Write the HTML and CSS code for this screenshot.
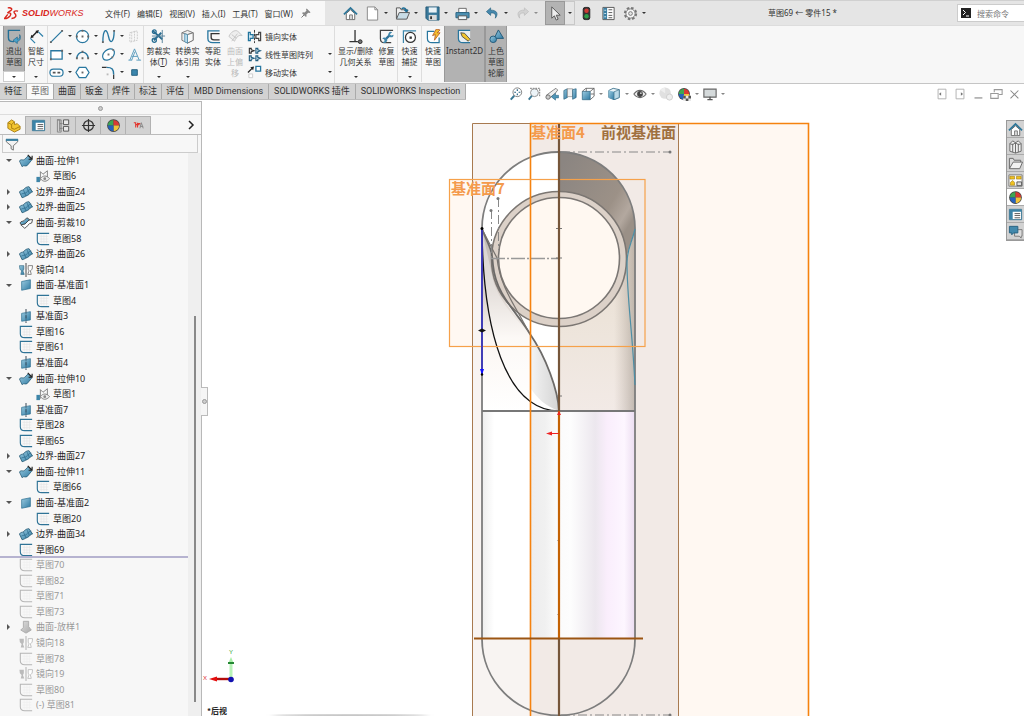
FILE: index.html
```html
<!DOCTYPE html>
<html lang="zh-CN">
<head>
<meta charset="utf-8">
<title>SOLIDWORKS</title>
<link rel="stylesheet" href="styles.css">
</head>
<body>
<svg class="defs" aria-hidden="true">
<defs>
<linearGradient id="steel" x1="0" y1="0" x2="1" y2="1"><stop offset="0" stop-color="#9ccbe0"/><stop offset="1" stop-color="#2f7ba3"/></linearGradient>
<linearGradient id="ash" x1="0" y1="0" x2="1" y2="1"><stop offset="0" stop-color="#ddd"/><stop offset="1" stop-color="#aaa"/></linearGradient>
<symbol id="home" viewBox="0 0 16 16"><path d="M3.500 8v6.500h9V8L8 4z" fill="#fff" stroke="#666"/><path d="M1 9l7-7 7 7" fill="none" stroke="#2d7699" stroke-width="1.800"/><path d="M7 14V9.500h3V14" fill="#ddd" stroke="#777"/></symbol>
<symbol id="doc" viewBox="0 0 16 16"><path d="M2.500 1h8l3 3v11h-11z" fill="#fff" stroke="#888"/><path d="M10.500 1v3h3" fill="none" stroke="#888"/></symbol>
<symbol id="open" viewBox="0 0 16 16"><path d="M1.500 13V2h4l1 2H13v9z" fill="#eee" stroke="#555"/><path d="M1.500 14l3-7H15.500l-3 7z" fill="#c8dce6" stroke="#555"/><path d="M7 3c3-2 5 0 5 2M10 4l2 2 2-2" fill="none" stroke="#1b6d96" stroke-width="1.400"/></symbol>
<symbol id="save" viewBox="0 0 16 16"><path d="M1 1h14v14H3l-2-2z" fill="#39789a" stroke="#245b78"/><path d="M4 1.500h8.500V7H4z" fill="#e9f2f6"/><path d="M4 9.500h8.500V15H4z" fill="#d8dadb"/><path d="M5.500 11h2v3h-2z" fill="#333"/></symbol>
<symbol id="print" viewBox="0 0 16 16"><path d="M4 2.500h8V7H4z" fill="#fff" stroke="#666"/><path d="M1 7h14v5.500H1z" fill="#4d90b2" stroke="#286281"/><path d="M3.500 10.500h9v4h-9z" fill="#eef6fa" stroke="#555"/></symbol>
<symbol id="undo" viewBox="0 0 16 16"><path d="M6 2L1.500 6 6 10V7.500c4-.5 6 1 5 5.500 4-5 1-9-5-8.500z" fill="#4688ad" stroke="#22607f" stroke-width=".7"/></symbol>
<symbol id="redo" viewBox="0 0 16 16"><path d="M10 2l4.500 4L10 10V7.500c-4-.5-6 1-5 5.500-4-5-1-9 5-8.500z" fill="#d2d2d2" stroke="#bbb" stroke-width=".7"/></symbol>
<symbol id="cursor" viewBox="0 0 16 16"><path d="M4 1v12l2.800-2.500 2 4.500 2-1-2-4.200H13z" fill="#eee" stroke="#555"/></symbol>
<symbol id="lights" viewBox="0 0 16 16"><rect x="4.500" y="1.500" width="7" height="13" rx="2" fill="#333" stroke="#222"/><circle cx="8" cy="5" r="2.400" fill="#cf3a34"/><circle cx="8" cy="11" r="2.400" fill="#2f9e48"/></symbol>
<symbol id="options" viewBox="0 0 16 16"><path d="M2 1.500h12v13H2z" fill="#fff" stroke="#555"/><path d="M2.500 2h4v12h-4z" fill="#3b7fa3"/><path d="M8 4h4M8 7h4M8 10h4M8 12.500h4" stroke="#555"/><path d="M3.500 4.500h2M3.500 8h2M3.500 11.500h2" stroke="#d8eaf2"/></symbol>
<symbol id="gear" viewBox="0 0 16 16"><circle cx="8" cy="8" r="6" fill="none" stroke="#777" stroke-width="2.200" stroke-dasharray="2.700 2"/><circle cx="8" cy="8" r="4.900" fill="#f4f4f4" stroke="#777"/><circle cx="8" cy="8" r="2" fill="#e5e5e5" stroke="#777"/></symbol>
<symbol id="pin" viewBox="0 0 16 16"><path d="M9 2l5 5-1 1-2-.5L8.500 10l.3 2.500-1.300.5L3 8.500 3.600 7 6 7.300 8.600 5 8 3z" fill="#888"/><path d="M5.500 10.500L2 14" stroke="#777" stroke-width="1.300"/></symbol>
<symbol id="exit" viewBox="0 0 16 16"><path d="M14 1.500H1.500V9c0 3 2 4.500 5 4.500h1" fill="none" stroke="#246f96" stroke-width="1.500"/><path d="M13.500 6c2 4 0 7-2.500 7v2.500L6.500 12 11 8.500V11c2 0 3-2 2.500-5z" fill="#4ba3cb" stroke="#236486" stroke-width=".7"/></symbol>
<symbol id="dim" viewBox="0 0 16 16"><path d="M3 8.500l6-6" stroke="#222" stroke-width="1.500"/><path d="M1.500 9.800l1-3.600 2.600 2.600zM10.500 1l-3.700 1L9.500 4.700z" fill="#222"/><path d="M1.500 10l5 5M10 3l5 5" stroke="#2f81aa" stroke-width="1.300"/></symbol>
<symbol id="line" viewBox="0 0 16 16"><path d="M2 14L14 2" stroke="#2877a0" stroke-width="1.400"/><path d="M1 13h2v2H1zM13 1h2v2h-2z" fill="#666"/></symbol>
<symbol id="circle" viewBox="0 0 16 16"><circle cx="8" cy="8" r="6.500" fill="#fff" stroke="#2877a0" stroke-width="1.300"/><path d="M7 7h2v2H7zM13 7h2v2h-2zM7 1h2v2H7zM1 7h2v2H1z" fill="#666"/></symbol>
<symbol id="spline" viewBox="0 0 16 16"><path d="M2 14C2 0 6-2 8 8s6 5 6-6" fill="none" stroke="#2877a0" stroke-width="1.400"/><path d="M1 13h2v2H1zM13 1h2v2h-2z" fill="#666"/></symbol>
<symbol id="plane-off" viewBox="0 0 16 16"><path d="M3 4l8-2v10l-8 2zM5 3v11M8 2v12" fill="none" stroke="#ccc" stroke-dasharray="2 1"/></symbol>
<symbol id="rect" viewBox="0 0 16 16"><path d="M2 4h12v9H2z" fill="#fff" stroke="#2877a0" stroke-width="1.400"/><path d="M1 12h2v2H1zM13 3h2v2h-2z" fill="#666"/></symbol>
<symbol id="arc" viewBox="0 0 16 16"><path d="M2 12a6 6.500 0 0 1 12 0" fill="none" stroke="#2877a0" stroke-width="1.400"/><path d="M1 11h2v2H1zM13 11h2v2h-2zM7 11h2v2H7zM7 4h2v2H7z" fill="#666"/></symbol>
<symbol id="ellipse" viewBox="0 0 16 16"><ellipse cx="8" cy="8" rx="7.200" ry="5" transform="rotate(-42 8 8)" fill="#fff" stroke="#2877a0" stroke-width="1.300"/><path d="M7 7h2v2H7zM12 2h2v2h-2zM11 10h2v2h-2z" fill="#777"/></symbol>
<symbol id="lettering" viewBox="0 0 16 16"><path d="M1.500 14h4M10 14h5M3 14L8 2l5 12M5.500 10h5.500M5 14L8.500 5" fill="none" stroke="#5a9bbd" stroke-width="1"/></symbol>
<symbol id="slot" viewBox="0 0 16 16"><rect x="1" y="4.500" width="14" height="7.500" rx="3.700" fill="#fff" stroke="#2877a0" stroke-width="1.300"/><path d="M4 8.200h3M9 8.200h3" stroke="#555" stroke-width="1.800"/></symbol>
<symbol id="polygon" viewBox="0 0 16 16"><path d="M4.500 2.500h7L15 8l-3.500 5.500h-7L1 8z" fill="#fff" stroke="#2877a0" stroke-width="1.300"/><path d="M7 7h2v2H7z" fill="#666"/></symbol>
<symbol id="fillet" viewBox="0 0 16 16"><path d="M1 2.500h5M13.500 10v5" stroke="#333" stroke-width="1.300"/><path d="M6 2.500c6 0 7.500 2 7.500 7.500" fill="none" stroke="#2877a0" stroke-width="1.500"/><path d="M6 9h2v2H6z" fill="#bbb"/></symbol>
<symbol id="point" viewBox="0 0 16 16"><path d="M5 5h6v6H5z" fill="#3a86ad" stroke="#24607f"/></symbol>
<symbol id="trim" viewBox="0 0 16 16"><path d="M2 2l10 9M3 12l8-8" stroke="#2a6c90" stroke-width="2"/><circle cx="3.500" cy="3" r="2" fill="none" stroke="#286d92" stroke-width="1.400"/><circle cx="3.500" cy="12" r="2.200" fill="none" stroke="#286d92" stroke-width="1.400"/><path d="M1 7.500h14M12 1v14" stroke="#54809a"/></symbol>
<symbol id="cube" viewBox="0 0 16 16"><path d="M2 4l6-2.500L14 4v8l-6 3-6-3z" fill="#eee" stroke="#777"/><path d="M2 4l6 2 6-2M8 6v9" fill="none" stroke="#777"/><path d="M8 6v9l6-3V4z" fill="#f8f8f8" stroke="#777"/><path d="M5 5v8.500L8 15V6z" fill="#bcdbea" stroke="#4a8fb2" stroke-width=".8"/></symbol>
<symbol id="offset" viewBox="0 0 16 16"><path d="M14.500 2H2v8c0 3 2 4.500 5 4.500h8" fill="none" stroke="#2877a0" stroke-width="1.400"/><path d="M14.500 5H5.500v4c0 2 1 2.500 3 2.500h6" fill="none" stroke="#333" stroke-width="1.400"/></symbol>
<symbol id="surf-off" viewBox="0 0 16 16"><path d="M1 8c2-5 6-7 9-6l5 5c-3-1-6 1-8 6zM4 6l5 4M4 13l6-8" fill="#eee" stroke="#c5c5c5"/></symbol>
<symbol id="mirror" viewBox="0 0 16 16"><path d="M8 1v14" stroke="#333" stroke-dasharray="3 1"/><path d="M1.500 3.500h2V6h3v4h-3v2.500h-2z" fill="#d7ebf5" stroke="#22749d" stroke-width="1.300"/><path d="M14.500 3.500h-2V6h-3v4h3v2.500h2z" fill="#fff" stroke="#444" stroke-width="1.300"/></symbol>
<symbol id="pattern" viewBox="0 0 16 16"><path d="M2.500 1.500v5h2v-1.500l3-1-3-1V1.500z" fill="#fff" stroke="#333" stroke-width="1.200"/><path d="M9.500 1.500v5h2v-1.500l3-1-3-1V1.500zM2.500 9.500v5h2V13l3-1-3-1V9.500zM9.500 9.500v5h2V13l3-1-3-1V9.500z" fill="#d9edf6" stroke="#235f80" stroke-width="1.200"/></symbol>
<symbol id="move" viewBox="0 0 16 16"><path d="M9.500 1.500h5v5h-5z" fill="#fff" stroke="#2877a0" stroke-width="1.400"/><path d="M2 9.500h4v4H2z" fill="#fff" stroke="#ccc"/><path d="M1 8l5-5" stroke="#222" stroke-width="1.300"/><path d="M7.500 1.500l-4 1 3 3z" fill="#222"/></symbol>
<symbol id="relations" viewBox="0 0 16 16"><path d="M7.500 1v12M1.500 13.500h9" stroke="#333" stroke-width="1.400"/><circle cx="13" cy="13.500" r="2" fill="#777" stroke="#222"/></symbol>
<symbol id="repair" viewBox="0 0 16 16"><path d="M15 1.500H1.500V10c0 3 2 4.500 4 4.500H13" fill="none" stroke="#444" stroke-width="1.300"/><path d="M6.500 11.500l5-5" stroke="#2e7095" stroke-width="2.400"/><path d="M14 3.500a2.800 2.800 0 1 0 1.500 2.500l-2.500 1-1.500-1.500z" fill="#3f86ab"/><path d="M4 14a2.800 2.800 0 1 0-.5-3.500l2 .5.500 2z" fill="#3f86ab"/></symbol>
<symbol id="snap" viewBox="0 0 16 16"><path d="M15 2H1.500v13" fill="none" stroke="#3d88ad" stroke-width="1.300"/><circle cx="9" cy="9" r="5.300" fill="#fff" stroke="#333" stroke-width="1.300"/><path d="M8 8h2.500v2.500H8z" fill="#333"/></symbol>
<symbol id="rapid" viewBox="0 0 16 16"><path d="M9 2.500H1.500V10c0 3 2 4.500 5 4.500H14V9" fill="#fff" stroke="#28769e" stroke-width="1.300"/><path d="M11 0L7 7l3-1-1 6 6-8h-3l3-3z" fill="#f2bc2c" stroke="#b05220" stroke-width=".8"/></symbol>
<symbol id="instant" viewBox="0 0 16 16"><path d="M14 1.500H1.500V10c0 3 2 4.500 5 4.500H14" fill="#e8eef0" stroke="#28769e" stroke-width="1.300"/><path d="M4 4l4 .5 6 6.500-2 2-6.500-5z" fill="#f0c52e" stroke="#454545" stroke-width=".9"/></symbol>
<symbol id="contour" viewBox="0 0 16 16"><path d="M10 1l5.500 9H5.500z" fill="url(#steel)" stroke="#1f5877"/><circle cx="4.500" cy="11" r="3.500" fill="url(#steel)" stroke="#1f5877"/></symbol>
<symbol id="zoomfit" viewBox="0 0 16 16"><circle cx="9.500" cy="6" r="5" fill="#fff" stroke="#777"/><path d="M9.500 2.500v2M9.500 7.500v2M6 6h2M11 6h2" stroke="#235f80" stroke-width="1.300"/><path d="M6 10l-4 4.500" stroke="#397894" stroke-width="2.200"/></symbol>
<symbol id="zoomarea" viewBox="0 0 16 16"><path d="M3.500 1.500h11v10" fill="none" stroke="#666" stroke-dasharray="2 1"/><circle cx="8.500" cy="6.500" r="4.500" fill="#edf4f8" stroke="#888"/><path d="M5.500 10L2 14.500" stroke="#397894" stroke-width="2.200"/></symbol>
<symbol id="prevview" viewBox="0 0 16 16"><path d="M1.500 9.500l8-6 3-2 2 2-3 4-6 5z" fill="#eee" stroke="#777"/><path d="M7 11l5-4v2.500h3.500v3H12V15z" fill="#4e95b7" stroke="#286281" stroke-width=".6"/><circle cx="3.500" cy="11.500" r="2.500" fill="#ccc" stroke="#666"/></symbol>
<symbol id="section" viewBox="0 0 16 16"><path d="M1 4l4-2v10l-4 2z" fill="url(#steel)" stroke="#28627f" stroke-width=".8"/><path d="M5 2h6v9H5z" fill="#f0f0f0" stroke="#888" stroke-width=".8"/><path d="M11 3l4-1v10l-4 2z" fill="url(#steel)" stroke="#28627f" stroke-width=".8"/></symbol>
<symbol id="orient" viewBox="0 0 16 16"><path d="M1.500 5h9v9.500h-9z" fill="url(#steel)" stroke="#28627f" stroke-width=".8"/><path d="M1.500 5l4-3.500h9.500L10.500 5M15 1.500v9l-4.500 4M6 1.500V5M11 8h4" fill="none" stroke="#555" stroke-width=".9"/></symbol>
<symbol id="style" viewBox="0 0 16 16"><path d="M2 4l5-2.500L14 3v9l-6 2.500L2 12z" fill="#e9f3f7" stroke="#3b718b"/><path d="M2 4l6 1.500v9L2 12z" fill="url(#steel)"/><path d="M8 5.500L14 3v9l-6 2.500z" fill="#b9d9e7" stroke="#3b718b" stroke-width=".8"/></symbol>
<symbol id="eye" viewBox="0 0 16 16"><path d="M1 8c4-5.500 10-5.500 14 0-4 5.500-10 5.500-14 0z" fill="#eee" stroke="#666" stroke-width="1.200"/><circle cx="8" cy="8" r="3.300" fill="#444"/><circle cx="9" cy="7" r="1" fill="#ccc"/></symbol>
<symbol id="ball-off" viewBox="0 0 16 16"><circle cx="7" cy="7" r="6.500" fill="#e0e0e0"/><path d="M7 7L1.500 3.500A6.500 6.500 0 0 1 7 .5z" fill="#eee"/><circle cx="12" cy="11.500" r="3.500" fill="#eee" stroke="#ccc"/></symbol>
<symbol id="ball" viewBox="0 0 16 16"><circle cx="8" cy="8" r="6.800" fill="#444"/><path d="M8 8V2a6 6 0 0 0-6 6z" fill="#3da653"/><path d="M8 8V2a6 6 0 0 1 6 6z" fill="#d93934"/><path d="M8 8h6a6 6 0 0 1-6 6z" fill="#f0c43b"/><path d="M8 8v6a6 6 0 0 1-6-6z" fill="#2662bd"/></symbol>
<symbol id="scene" viewBox="0 0 16 16"><use href="#ball"/><path d="M7 10h9v6H7z" fill="#e8e8e8"/><path d="M7 10h3v3H7zM13 10h3v3h-3zM10 13h3v3h-3z" fill="#555"/></symbol>
<symbol id="monitor" viewBox="0 0 16 16"><path d="M1 2.500h14v9H1z" fill="#d5dadb" stroke="#666" stroke-width="1.300"/><path d="M8 11v3M5 14.500h6" stroke="#555" stroke-width="1.500"/></symbol>
<symbol id="collapse-l" viewBox="0 0 16 16"><path d="M3.500 2.500h9v11h-9z" fill="#fff" stroke="#aaa"/><path d="M7 6v4L4.500 8z" fill="#777"/></symbol>
<symbol id="collapse-r" viewBox="0 0 16 16"><path d="M3.500 2.500h9v11h-9z" fill="#fff" stroke="#aaa"/><path d="M9 6v4l2.500-2z" fill="#777"/></symbol>
<symbol id="minimize" viewBox="0 0 16 16"><path d="M4 12.500h9" stroke="#888" stroke-width="1.300"/></symbol>
<symbol id="restore" viewBox="0 0 16 16"><path d="M6 6V3h9v5.500h-3.500M2 7.500h8.500V13H2z" fill="none" stroke="#999" stroke-width="1.200"/></symbol>
<symbol id="close" viewBox="0 0 16 16"><path d="M4 4l9 9M13 4l-9 9" stroke="#888" stroke-width="1.200"/></symbol>
<symbol id="part" viewBox="0 0 16 16"><path d="M2 5l4-3 3 2v3l3-1 3 3v3l-6 3-7-4z" fill="#f3c631" stroke="#a97d12"/><path d="M2 5l4 2v4l3 1 6-3M6 7l3-3" fill="none" stroke="#a97d12"/></symbol>
<symbol id="props" viewBox="0 0 16 16"><path d="M1.500 2.500h13v11h-13z" fill="#fff" stroke="#2f708f"/><path d="M2 3h12v2H2zM2 5h3v8H2z" fill="#3b83a7"/><path d="M7 7h6M7 9h6M7 11.500h6" stroke="#555"/></symbol>
<symbol id="config" viewBox="0 0 16 16"><path d="M1 2h3v12M4 6h3M4 11h3" fill="none" stroke="#777"/><path d="M1.500 2h4v13h-4z" fill="none" stroke="#888"/><path d="M8 2h5.500v5H8zM8 9h5.500v5H8z" fill="#e8e8e8" stroke="#555"/></symbol>
<symbol id="target" viewBox="0 0 16 16"><circle cx="8" cy="8" r="5.200" fill="none" stroke="#333" stroke-width="1.300"/><path d="M8 1v14M1 8h14" stroke="#333" stroke-width="1.300"/></symbol>
<symbol id="inspect" viewBox="0 0 16 16"><path d="M3 5h2v5M7 5v5M7 6h3M5 7h4" stroke="#e2372f" stroke-width="1.200" fill="none"/><path d="M9.500 11L11 5l2 6M10 9h3" stroke="#888" fill="none"/></symbol>
<symbol id="funnel" viewBox="0 0 16 16"><path d="M1.500 3h13v2.500L9.500 10v5L7 13.500V10L1.500 5.500z" fill="#f2f2f2" stroke="#666"/><path d="M1 2h14v2.500H1z" fill="#397e9f"/></symbol>
<symbol id="extrude" viewBox="0 0 16 16"><path d="M.5 8c2-3 4 0 6-2l4-4 4 5-5 6c-2 2-4-1-6 1.500z" fill="url(#steel)" stroke="#1f546f" stroke-width=".8"/><path d="M10 1l5 5M15 2v4h-4" stroke="#222" fill="none" stroke-width="1.300"/></symbol>
<symbol id="boundary" viewBox="0 0 16 16"><path d="M.5 8c2-3 3-1 5-3s3-3 6-3l4 6c-3 0-3 3-6 4s-3 2-6 2.500z" fill="url(#steel)" stroke="#1f546f" stroke-width=".9"/><path d="M2.500 10.500c3-2 5 0 7-3s3-2 4.500-3M5 5.500l3 7M9 3l3 7" fill="none" stroke="#246384" stroke-width=".7"/></symbol>
<symbol id="trimsurf" viewBox="0 0 16 16"><path d="M2 10c2-2 4 0 6-2s3-4 7.500-4l-1 4c-4 0-5 5-8 6z" fill="#fff" stroke="#444"/><path d="M1 8c2-3 3-1 5-3l3-3 3 2-5 5-4 1z" fill="url(#steel)" stroke="#333" stroke-width=".9"/></symbol>
<symbol id="sketch" viewBox="0 0 16 16"><path d="M4 5h10M4 8h10M4 11h10M6 3v10M9 3v10M12 3v10" stroke="#e4e4e4" stroke-width=".7"/><path d="M15 1.500H1.500V10c0 3 2 4.500 5 4.500H15" fill="none" stroke="#2f7396" stroke-width="1.300"/></symbol>
<symbol id="sketch-off" viewBox="0 0 16 16"><path d="M4 5h10M4 8h10M4 11h10M6 3v10M9 3v10M12 3v10" stroke="#eee" stroke-width=".7"/><path d="M15 1.500H1.500V10c0 3 2 4.500 5 4.500H15" fill="none" stroke="#b5b5b5" stroke-width="1.200"/></symbol>
<symbol id="derived" viewBox="0 0 16 16"><path d="M1 14l4-1V3l3 3 5-4v9" fill="none" stroke="#777"/><path d="M.5 9h4v6h-4z" fill="#3d85a8"/><path d="M5 11c3-4 7-4 10.500 0-3.500 4-7.500 4-10.500 0z" fill="#eee" stroke="#777"/><circle cx="10" cy="11" r="1.600" fill="#888"/></symbol>
<symbol id="mirrorf" viewBox="0 0 16 16"><path d="M.5 3h5v4l-1 2 1.500 4H2l1-4-2-2z" fill="url(#steel)" stroke="#28627f" stroke-width=".7"/><path d="M8 0v16" stroke="#333"/><path d="M15.500 3h-5v4l1 2-1.500 4h4l-1-4 2-2z" fill="#fff" stroke="#777"/></symbol>
<symbol id="mirrorf-off" viewBox="0 0 16 16"><path d="M.5 3h5v4l-1 2 1.500 4H2l1-4-2-2z" fill="#bbb"/><path d="M8 0v16" stroke="#aaa"/><path d="M15.500 3h-5v4l1 2-1.500 4h4l-1-4 2-2z" fill="#fff" stroke="#bbb"/></symbol>
<symbol id="surfplane" viewBox="0 0 16 16"><path d="M3 4l10-2v10L3 14z" fill="url(#steel)" stroke="#2a6d8f" stroke-width=".8"/></symbol>
<symbol id="refplane" viewBox="0 0 16 16"><path d="M3 5l10-2v9.500L3 14z" fill="url(#steel)" stroke="#2a6d8f" stroke-width=".8"/><path d="M8 0v16" stroke="#234" stroke-dasharray="4 1 1 1"/></symbol>
<symbol id="loft-off" viewBox="0 0 16 16"><path d="M5 1.500h6v6l3 4-6 3.500-6-3.500 3-3z" fill="url(#ash)" stroke="#aaa"/></symbol>
<symbol id="library" viewBox="0 0 16 16"><path d="M2 5l3-3 3 2 3-2 3 3v8l-6 2-6-2z" fill="#eee" stroke="#666"/><path d="M5 5v9M8 4v11M11 5v9M2 5l3 1 3-2 3 2 3-1" fill="none" stroke="#666"/></symbol>
<symbol id="folder" viewBox="0 0 16 16"><path d="M1.500 13.500v-11h4l1 2h7v3" fill="#ddd" stroke="#666"/><path d="M1.500 13.500l4-7h10l-3 7z" fill="#f2f2f2" stroke="#666"/></symbol>
<symbol id="palette" viewBox="0 0 16 16"><path d="M1 2h14v12H1z" fill="#fff" stroke="#777"/><path d="M2 3.500h5v3H2zM9 3.500h5v3H9zM5 8l2 2v3H2.500v-3z" fill="#f0c220" stroke="#977310" stroke-width=".6"/><path d="M9.500 9.500h5v4h-5z" fill="#ddd" stroke="#555"/></symbol>
<symbol id="forum" viewBox="0 0 16 16"><path d="M7 6h8v7h-1v2l-2-2H7z" fill="#ddd" stroke="#777"/><path d="M1.500 2.500h9v7H6l-2 2v-2H1.500z" fill="#4389ac" stroke="#286281"/></symbol>
</defs>
</svg>

<div class="app">
<header class="titlebar">
  <div class="brand">
    <svg class="ds" viewBox="0 0 16 14" aria-hidden="true"><path d="M4 1c4-.5 5.500 1 3 3L3.500 6.500M4 6.500c3-.5 4 .5 2.500 3C5 11.800 3 12.500.5 12.500L4 8M15 4.500c-3.500-1-5.500.5-3.500 2.500 2 2 1.500 5-3.500 5.300" fill="none" stroke="#d8261c" stroke-width="1.500"/></svg>
    <span class="wordmark"><b>SOLID</b>WORKS</span>
  </div>
  <nav class="menu">
    <button>文件(F)</button><button>编辑(E)</button><button>视图(V)</button><button>插入(I)</button><button>工具(T)</button><button>窗口(W)</button>
    <button aria-label="固定"><svg class="s12"><use href="#pin"/></svg></button>
  </nav>
  <div class="quick">
    <button class="solo" aria-label="主页"><svg class="s16"><use href="#home"/></svg></button>
    <button class="drop" aria-label="新建"><svg class="s16"><use href="#doc"/></svg><i class="tri"></i></button>
    <button class="drop" aria-label="打开"><svg class="s16"><use href="#open"/></svg><i class="tri"></i></button>
    <button class="drop" aria-label="保存"><svg class="s16"><use href="#save"/></svg><i class="tri"></i></button>
    <button class="drop" aria-label="打印"><svg class="s16"><use href="#print"/></svg><i class="tri"></i></button>
    <button class="drop" aria-label="撤消"><svg class="s16"><use href="#undo"/></svg><i class="tri"></i></button>
    <button class="drop dim" aria-label="重做"><svg class="s16"><use href="#redo"/></svg><i class="tri"></i></button>
    <button class="pick" aria-label="选择"><span class="pick-face"><svg class="s16"><use href="#cursor"/></svg></span><span class="pick-more"><i class="tri"></i></span></button>
    <button class="solo" aria-label="重建"><svg class="s16"><use href="#lights"/></svg></button>
    <button class="solo" aria-label="文件属性"><svg class="s16"><use href="#options"/></svg></button>
    <button class="drop" aria-label="选项"><svg class="s16"><use href="#gear"/></svg><i class="tri"></i></button>
  </div>
  <h1 class="doc-title">草图69 ← 零件15 *</h1>
  <label class="search"><svg class="s10" viewBox="0 0 10 10"><rect width="10" height="10" fill="#222"/><path d="M2 2l2.500 2.500L2 7M5 8h3" fill="none" stroke="#fff"/></svg><input type="text" placeholder="搜索命令" aria-label="搜索命令"></label>
</header>

<section class="ribbon">
  <div class="exit-group"><button class="tool pressed"><svg class="s16"><use href="#exit"/></svg><span>退出<br>草图</span></button><button class="exit-more" aria-label="更多"><i class="tri"></i></button></div>
  <button class="tool w22"><svg class="s16"><use href="#dim"/></svg><span>智能<br>尺寸</span><i class="tri"></i></button>
  <div class="sketch-grid">
    <button class="mini" aria-label="直线"><svg class="s16"><use href="#line"/></svg><i class="tri"></i></button>
    <button class="mini" aria-label="圆"><svg class="s16"><use href="#circle"/></svg><i class="tri"></i></button>
    <button class="mini" aria-label="样条曲线"><svg class="s16"><use href="#spline"/></svg><i class="tri"></i></button>
    <button class="mini" aria-label="基准面"><svg class="s16"><use href="#plane-off"/></svg></button>
    <button class="mini" aria-label="矩形"><svg class="s16"><use href="#rect"/></svg><i class="tri"></i></button>
    <button class="mini" aria-label="圆弧"><svg class="s16"><use href="#arc"/></svg><i class="tri"></i></button>
    <button class="mini" aria-label="椭圆"><svg class="s16"><use href="#ellipse"/></svg><i class="tri"></i></button>
    <button class="mini" aria-label="文字"><svg class="s16"><use href="#lettering"/></svg></button>
    <button class="mini" aria-label="槽口"><svg class="s16"><use href="#slot"/></svg><i class="tri"></i></button>
    <button class="mini" aria-label="多边形"><svg class="s16"><use href="#polygon"/></svg></button>
    <button class="mini" aria-label="圆角"><svg class="s16"><use href="#fillet"/></svg><i class="tri"></i></button>
    <button class="mini" aria-label="点"><svg class="s16"><use href="#point"/></svg></button>
  </div>
  <button class="tool w30"><svg class="s16"><use href="#trim"/></svg><span>剪裁实<br>体(<u>T</u>)</span><i class="tri"></i></button>
  <button class="tool w30"><svg class="s16"><use href="#cube"/></svg><span>转换实<br>体引用</span><i class="tri"></i></button>
  <button class="tool w22"><svg class="s16"><use href="#offset"/></svg><span>等距<br>实体</span></button>
  <button class="tool w22 off" disabled><svg class="s16"><use href="#surf-off"/></svg><span>曲面<br>上偏<br>移</span></button>
  <div class="stack">
    <button><svg class="s16"><use href="#mirror"/></svg><span>镜向实体</span></button>
    <button><svg class="s16"><use href="#pattern"/></svg><span>线性草图阵列</span><i class="tri"></i></button>
    <button><svg class="s16"><use href="#move"/></svg><span>移动实体</span><i class="tri"></i></button>
  </div>
  <button class="tool w42"><svg class="s16"><use href="#relations"/></svg><span>显示/删除<br>几何关系</span><i class="tri"></i></button>
  <button class="tool w22 rule"><svg class="s16"><use href="#repair"/></svg><span>修复<br>草图</span></button>
  <button class="tool w24 rule"><svg class="s16"><use href="#snap"/></svg><span>快速<br>捕捉</span><i class="tri"></i></button>
  <button class="tool w22"><svg class="s16"><use href="#rapid"/></svg><span>快速<br>草图</span></button>
  <button class="tool w42 pressed"><svg class="s16"><use href="#instant"/></svg><span>Instant2D</span></button>
  <button class="tool w22 pressed"><svg class="s16"><use href="#contour"/></svg><span>上色<br>草图<br>轮廓</span></button>
</section>

<div class="strip">
  <nav class="tabs">
    <button>特征</button><button class="on">草图</button><button>曲面</button><button>钣金</button><button>焊件</button><button>标注</button><button>评估</button><button class="wide">MBD Dimensions</button><button class="wide">SOLIDWORKS 插件</button><button class="wide">SOLIDWORKS Inspection</button>
  </nav>
  <div class="hud">
    <button aria-label="整屏显示全图"><svg class="s14"><use href="#zoomfit"/></svg></button>
    <button aria-label="局部放大"><svg class="s14"><use href="#zoomarea"/></svg></button>
    <button aria-label="上一视图"><svg class="s14"><use href="#prevview"/></svg></button>
    <button aria-label="剖面视图"><svg class="s14"><use href="#section"/></svg></button>
    <button aria-label="视图定向"><svg class="s14"><use href="#orient"/></svg><i class="tri"></i></button>
    <button aria-label="显示样式"><svg class="s14"><use href="#style"/></svg><i class="tri"></i></button>
    <button aria-label="隐藏/显示"><svg class="s14"><use href="#eye"/></svg><i class="tri"></i></button>
    <button aria-label="编辑外观"><svg class="s14"><use href="#ball-off"/></svg></button>
    <button aria-label="应用布景"><svg class="s14"><use href="#scene"/></svg><i class="tri"></i></button>
    <button aria-label="视图设定"><svg class="s14"><use href="#monitor"/></svg><i class="tri"></i></button>
  </div>
  <div class="window">
    <button aria-label="左侧折叠"><svg class="s14"><use href="#collapse-l"/></svg></button>
    <button aria-label="右侧折叠"><svg class="s14"><use href="#collapse-r"/></svg></button>
    <button aria-label="最小化"><svg class="s14"><use href="#minimize"/></svg></button>
    <button aria-label="还原"><svg class="s14"><use href="#restore"/></svg></button>
    <button aria-label="关闭"><svg class="s14"><use href="#close"/></svg></button>
  </div>
</div>

<main class="work">
  <aside class="panel">
    <div class="grip"><span></span></div>
    <div class="ptabs">
      <button class="on" aria-label="设计树"><svg class="s16"><use href="#part"/></svg></button>
      <button aria-label="属性"><svg class="s16"><use href="#props"/></svg></button>
      <button aria-label="配置"><svg class="s16"><use href="#config"/></svg></button>
      <button aria-label="尺寸专家"><svg class="s16"><use href="#target"/></svg></button>
      <button aria-label="显示管理"><svg class="s16"><use href="#ball"/></svg></button>
      <button aria-label="检查"><svg class="s16"><use href="#inspect"/></svg></button>
      <button class="next" aria-label="更多标签"><svg viewBox="0 0 8 10"><path d="M2 1l4 4-4 4" fill="none" stroke="#222" stroke-width="1.500"/></svg></button>
    </div>
    <div class="filter"><svg class="s14"><use href="#funnel"/></svg><input type="text" aria-label="过滤"></div>
    <div class="tree-wrap">
      <ul class="tree">
        <li><i class="open"></i><svg class="s14"><use href="#extrude"/></svg>曲面-拉伸1</li>
        <li class="sub"><svg class="s14"><use href="#derived"/></svg>草图6</li>
        <li><i class="shut"></i><svg class="s14"><use href="#boundary"/></svg>边界-曲面24</li>
        <li><i class="shut"></i><svg class="s14"><use href="#boundary"/></svg>边界-曲面25</li>
        <li><i class="open"></i><svg class="s14"><use href="#trimsurf"/></svg>曲面-剪裁10</li>
        <li class="sub"><svg class="s14"><use href="#sketch"/></svg>草图58</li>
        <li><i class="shut"></i><svg class="s14"><use href="#boundary"/></svg>边界-曲面26</li>
        <li><i></i><svg class="s14"><use href="#mirrorf"/></svg>镜向14</li>
        <li><i class="open"></i><svg class="s14"><use href="#surfplane"/></svg>曲面-基准面1</li>
        <li class="sub"><svg class="s14"><use href="#sketch"/></svg>草图4</li>
        <li><i></i><svg class="s14"><use href="#refplane"/></svg>基准面3</li>
        <li><i></i><svg class="s14"><use href="#sketch"/></svg>草图16</li>
        <li><i></i><svg class="s14"><use href="#sketch"/></svg>草图61</li>
        <li><i></i><svg class="s14"><use href="#refplane"/></svg>基准面4</li>
        <li><i class="open"></i><svg class="s14"><use href="#extrude"/></svg>曲面-拉伸10</li>
        <li class="sub"><svg class="s14"><use href="#derived"/></svg>草图1</li>
        <li><i></i><svg class="s14"><use href="#refplane"/></svg>基准面7</li>
        <li><i></i><svg class="s14"><use href="#sketch"/></svg>草图28</li>
        <li><i></i><svg class="s14"><use href="#sketch"/></svg>草图65</li>
        <li><i class="shut"></i><svg class="s14"><use href="#boundary"/></svg>边界-曲面27</li>
        <li><i class="open"></i><svg class="s14"><use href="#extrude"/></svg>曲面-拉伸11</li>
        <li class="sub"><svg class="s14"><use href="#sketch"/></svg>草图66</li>
        <li><i class="open"></i><svg class="s14"><use href="#surfplane"/></svg>曲面-基准面2</li>
        <li class="sub"><svg class="s14"><use href="#sketch"/></svg>草图20</li>
        <li><i class="shut"></i><svg class="s14"><use href="#boundary"/></svg>边界-曲面34</li>
        <li class="rollback"><i></i><svg class="s14"><use href="#sketch"/></svg>草图69</li>
        <li class="off"><i></i><svg class="s14"><use href="#sketch-off"/></svg>草图70</li>
        <li class="off"><i></i><svg class="s14"><use href="#sketch-off"/></svg>草图82</li>
        <li class="off"><i></i><svg class="s14"><use href="#sketch-off"/></svg>草图71</li>
        <li class="off"><i></i><svg class="s14"><use href="#sketch-off"/></svg>草图73</li>
        <li class="off"><i class="shut"></i><svg class="s14"><use href="#loft-off"/></svg>曲面-放样1</li>
        <li class="off"><i></i><svg class="s14"><use href="#mirrorf-off"/></svg>镜向18</li>
        <li class="off"><i></i><svg class="s14"><use href="#sketch-off"/></svg>草图78</li>
        <li class="off"><i></i><svg class="s14"><use href="#mirrorf-off"/></svg>镜向19</li>
        <li class="off"><i></i><svg class="s14"><use href="#sketch-off"/></svg>草图80</li>
        <li class="off"><i></i><svg class="s14"><use href="#sketch-off"/></svg>(-) 草图81</li>
      </ul>
      <div class="scroll"><span class="thumb"></span></div>
    </div>
    <button class="splitter" aria-label="折叠面板"><span></span></button>
  </aside>

  <section class="viewport">
    <svg class="model" role="img" aria-label="模型视图">
      <defs>
        <linearGradient id="barrel" gradientUnits="userSpaceOnUse" x1="482" x2="635" y1="0" y2="0"><stop offset="0" stop-color="#ededed"/><stop offset=".08" stop-color="#fff"/><stop offset=".31" stop-color="#fff"/><stop offset=".315" stop-color="#ededed"/><stop offset=".41" stop-color="#f0f0f0"/><stop offset=".49" stop-color="#fbfbfb"/><stop offset=".58" stop-color="#fdfdfd"/><stop offset=".74" stop-color="#ece7ee"/><stop offset=".82" stop-color="#faeefc"/><stop offset=".93" stop-color="#fdf6ff"/><stop offset="1" stop-color="#ebdcf0"/></linearGradient>
        <linearGradient id="shade" gradientUnits="userSpaceOnUse" x1="559" x2="635" y1="170" y2="215"><stop offset="0" stop-color="#8b8581"/><stop offset=".7" stop-color="#9c9187"/><stop offset=".9" stop-color="#b3a89f"/><stop offset="1" stop-color="#9a9087"/></linearGradient>
        <linearGradient id="wall" x1="0" y1="0" x2="0" y2="1"><stop offset="0" stop-color="#e6dbd0"/><stop offset=".5" stop-color="#ede4da"/><stop offset="1" stop-color="#f2eae6"/></linearGradient>
        <linearGradient id="rim" x1="0" x2="1" y1="0" y2="0"><stop offset="0" stop-color="#b5a99e" stop-opacity="0"/><stop offset="1" stop-color="#a0968c" stop-opacity=".6"/></linearGradient>
        <linearGradient id="left" x1="0" y1="0" x2="0" y2="1"><stop offset="0" stop-color="#bdb7b2"/><stop offset=".35" stop-color="#d9d1cb"/><stop offset=".6" stop-color="#fbf6f2"/><stop offset="1" stop-color="#fff"/></linearGradient>
        <linearGradient id="blade" x1="0" y1="0" x2="1" y2="0"><stop offset="0" stop-color="#f4f4f4"/><stop offset="1" stop-color="#d4d4d4"/></linearGradient>
        <filter id="haze"><feGaussianBlur stdDeviation="3"/></filter>
      </defs>
      <g transform="translate(-202 -101)">
        <rect x="449.500" y="179.500" width="195" height="167" fill="#fff8f2"/>
        <rect x="530" y="124" width="278" height="600" fill="#fff8f2"/>
        <rect x="472.500" y="124" width="58" height="600" fill="#f8f4f2"/>
        <rect x="530.500" y="124" width="148" height="600" fill="#f2eae6"/>
        <path d="M482 229A76.500 76.500 0 0 1 559 152V411H482z" fill="#fff"/>
        <path d="M482 229C487 242 492 250 493 270 500 303 517 315 530 334L559 411H482z" fill="url(#left)"/>
        <path d="M559 152A76.500 76.500 0 0 1 635 229V265H559z" fill="url(#shade)"/>
        <path d="M559 259h67l9-30V411H559z" fill="url(#wall)"/>
        <path d="M614 300l13-41 8-30V411H614z" fill="url(#rim)"/>
        <path d="M482 229C483 330 505 410 559 411 558 390 546 357 530 334 515 318 500 303 493 280Z" fill="#fff" opacity=".35"/>
        <path d="M530 334C546 357 558 390 559 411C547 407 536 398 530 387z" fill="url(#blade)"/>
        <rect x="482" y="411" width="153" height="228" fill="url(#barrel)"/>
        <circle cx="559" cy="259" r="67.500" fill="#dcd1c8" stroke="#7b7672" stroke-width="1.600"/>
        <circle cx="559" cy="258" r="60.500" fill="#fff8f1" stroke="#7b7774" stroke-width="1.600"/>
        <path d="M482 228.500A76.500 76.500 0 0 1 635 228.500V639A76.500 76.500 0 0 1 482 639z" fill="none" stroke="#7d7d7d" stroke-width="1.800"/>
        <path d="M482 229C488 244 492 248 493 265 496 296 518 313 530 334C546 357 558 390 559 411" fill="none" stroke="#6c6a68" stroke-width="1.800"/>
        <path d="M482 229L497 258C500 288 517 308 528 331" fill="none" stroke="#77736f" stroke-width="1.200"/>
        <path d="M482 229C483 330 505 410 559 411" fill="none" stroke="#111" stroke-width="1.300"/>
        <path d="M635 229C632 242 627 250 627 262 627 300 632 325 635 385" fill="none" stroke="#4d8ea5" stroke-width="1.200"/>
        <path d="M482 411H635" stroke="#777" stroke-width="2"/>
        <path d="M561 152H670M561 715H670" stroke="#888" stroke-dasharray="9 3 2 3"/>
        <path d="M491 258.500H559" stroke="#999" stroke-width="1.500" stroke-dasharray="14 2 2 2"/>
        <path d="M491.500 210V258M498.500 198V250" stroke="#888" stroke-dasharray="9 3 2 3"/>
        <path d="M556 228.500h6M556 396h6M556 258h6M558 540v1M558 614v1" stroke="#777"/>
        <circle cx="670" cy="152" r="1.500" fill="#777"/><circle cx="670" cy="715" r="1.500" fill="#777"/><circle cx="491" cy="210.500" r="1.500" fill="#777"/><circle cx="498" cy="198.500" r="1.500" fill="#777"/>
        <path d="M472.500 716V123.500H678.500V716" fill="none" stroke="#a87a50"/>
        <path d="M530.500 716V123.500H808.500V716" fill="none" stroke="#f5820f" stroke-width="1.600"/>
        <rect x="449.500" y="179.500" width="195.500" height="167" fill="none" stroke="#f6a14a" stroke-width="1.200"/>
        <path d="M559 124V411M559 639V716" stroke="#76563a" stroke-width="2.200"/>
        <path d="M559 411V639" stroke="#c46204" stroke-width="2.200"/>
        <path d="M474 638.500H643" stroke="#9b5512" stroke-width="2"/>
        <path d="M482 229V375" stroke="#3936bc" stroke-width="1.800"/>
        <path d="M480 369h4l-2 6z" fill="#11f"/><path d="M478 330.500l4-2 4 2-4 2z" fill="#111"/><circle cx="482" cy="228.500" r="1.500"/><circle cx="482" cy="374.500" r="1.200"/>
        <path d="M559 433.500H552" stroke="#e22"/><path d="M546 433.500l6-2v4zM559 411l2 4h-4z" fill="#e22"/>
        <text class="datum bright" x="531" y="138">基准面4</text>
        <text class="datum brown" x="601" y="138">前视基准面</text>
        <text class="datum bright" x="451" y="194">基准面7</text>
        <path d="M231 679V663" stroke="#b7f3b7" stroke-width="3"/><path d="M228 664h6l-3-7z" fill="#a9efa9"/><path d="M228 663h6" stroke="#157c25" stroke-width="1.800"/>
        <path d="M231 679H215" stroke="#b30c0c" stroke-width="2.400"/><path d="M209 679l8-2.500v5z" fill="#e50e0e"/><circle cx="231" cy="679.500" r="2.800" fill="#1111b0"/>
        <text class="axis green" x="229" y="654">Y</text><text class="axis red" x="203" y="680">X</text>
        <text class="view-name" x="207" y="714">*后视</text>
        <ellipse cx="350" cy="719" rx="78" ry="4" fill="#999" filter="url(#haze)"/>
      </g>
    </svg>
    <nav class="taskpane">
      <button aria-label="资源"><svg class="s16"><use href="#home"/></svg></button>
      <button aria-label="设计库"><svg class="s16"><use href="#library"/></svg></button>
      <button aria-label="文件探索器"><svg class="s16"><use href="#folder"/></svg></button>
      <button aria-label="视图调色板"><svg class="s16"><use href="#palette"/></svg></button>
      <button class="on" aria-label="外观"><svg class="s16"><use href="#ball"/></svg></button>
      <button aria-label="自定义属性"><svg class="s16"><use href="#props"/></svg></button>
      <button aria-label="论坛"><svg class="s16"><use href="#forum"/></svg></button>
    </nav>
  </section>
</main>
</div>
</body>
</html>
```

FILE: styles.css
```css
* { box-sizing: border-box; }
html, body { height: 100%; margin: 0; }
body { font: 8px/11px "Noto Sans", "Noto Sans CJK SC", sans-serif; color: #333; overflow: hidden; }
button { font: inherit; color: inherit; border: 0; padding: 0; margin: 0; background: none; display: flex; align-items: center; white-space: nowrap; }
input { font: inherit; border: 0; padding: 0; background: none; min-width: 0; flex: 1; outline: 0; }
.defs { position: absolute; width: 0; height: 0; }
svg { flex: none; display: block; }
.s10 { width: 10px; height: 10px; }
.s12 { width: 12px; height: 12px; }
.s14 { width: 14px; height: 14px; }
.s16 { width: 15px; height: 15px; }
.tri { flex: none; border: 2px solid transparent; border-top-color: #333; border-bottom: 0; width: 4px; }

.app { height: 100%; display: flex; flex-direction: column; background: #fff; }

.titlebar { flex: none; height: 26px; display: flex; align-items: center; background: #e5e5e5; border-top: 1px solid #d0d0d0; border-bottom: 1px solid #ddd; }
.brand { align-self: stretch; display: flex; align-items: center; gap: 3px; width: 102px; padding-left: 4px; background: #f8f8f8; }
.ds { width: 15px; height: 15px; }
.wordmark { font: italic 9px/12px "Liberation Sans", sans-serif; color: #d8261c; }
.menu { align-self: stretch; display: flex; align-items: center; gap: 7px; width: 223px; padding-left: 3px; background: #f8f8f8; }
.quick { display: flex; align-items: center; padding-left: 18px; align-self: stretch; }
.solo { width: 22px; }
.drop { width: 30px; gap: 4px; }
.drop.dim .tri { opacity: .5; }
.pick { align-self: stretch; width: 34px; }
.pick-face { width: 20px; height: 24px; background: #b3b3b3; border: 1px solid #999; display: grid; place-items: center; }
.pick-more { width: 10px; height: 24px; border: 1px solid #c8c8c8; border-left: 0; display: grid; place-items: center; }
.doc-title { margin: 0 120px 0 auto; font-size: 8px; line-height: 12px; font-weight: 400; white-space: nowrap; }
.search { width: 67px; height: 18px; display: flex; align-items: center; gap: 6px; padding-left: 3px; background: #fff; border: 1px solid #ccc; border-right: 0; }

.ribbon { flex: none; height: 58px; display: flex; padding-left: 3px; background: #f7f7f7; border-bottom: 1px solid #c5c5c5; }
.tool { flex-direction: column; justify-content: flex-start; padding-top: 3px; gap: 1px; text-align: center; height: 56px; }
.tool.pressed { background: #b2b2b2; border: 1px solid #999; border-width: 0 1px; }
.tool.off { color: #bbb; }
.tool .tri { margin-top: auto; margin-bottom: 4px; }
.w22 { width: 22px; }
.w24 { width: 24px; }
.w30 { width: 29px; }
.w42 { width: 41px; }
.rule { border-right: 1px solid #ddd; }
.exit-group { width: 22px; }
.exit-group .tool { width: 22px; height: 45px; }
.exit-more { width: 22px; height: 11px; justify-content: center; border: 1px solid #ccc; background: #fff; }
.sketch-grid { display: grid; grid-template-columns: 26px 26px 26px 16px; grid-template-rows: repeat(3, 18px); padding-left: 1px; padding-top: 1px; border: 1px solid #ddd; border-width: 0 1px; width: 97px; }
.mini { gap: 4px; }
.stack { display: grid; grid-template-rows: repeat(3, 18px); padding-top: 1px; padding-right: 2px; width: 89px; border-right: 1px solid #ddd; }
.stack button { gap: 3px; padding-left: 1px; }
.stack .tri { margin-left: auto; }

.strip { flex: none; height: 17px; display: flex; align-items: flex-start; }
.tabs { display: flex; font: 9px/15px Roboto, "Noto Sans CJK SC", sans-serif; border-bottom: 1px solid #bbb; }
.tabs button { height: 15px; padding: 0 4px; background: #d2d2d2; border-right: 1px solid #aaa; }
.tabs .wide { padding: 0 5px; }
.tabs button.on { background: #fafafa; color: #666; }
.hud { display: flex; align-items: center; height: 17px; margin-left: 41px; padding-top: 2px; }
.hud button { padding: 0 2px; gap: 4px; }
.hud .tri { opacity: .6; }
.window { display: flex; height: 17px; padding-top: 2px; margin-left: auto; gap: 4px; margin-right: 3px; }

.work { flex: 1; min-height: 0; display: flex; }
.panel { width: 202px; display: flex; flex-direction: column; background: #f7f7f7; border: 1px solid #b8b8b8; border-width: 1px 1px 0 0; position: relative; }
.grip { height: 13px; display: grid; place-items: center; border-bottom: 1px solid #ddd; }
.grip span, .splitter span { width: 5px; height: 5px; border-radius: 50%; background: #ccc; border: 1px solid #999; }
.ptabs { display: flex; height: 20px; padding: 1px 1px 0; border-bottom: 1px solid #bbb; }
.ptabs button { width: 25px; justify-content: center; background: #d2d2d2; border: 1px solid #b2b2b2; border-width: 1px 1px 0 0; }
.ptabs .on { background: none; border-top: 0; }
.ptabs .next { width: 18px; margin-left: auto; background: none; border: 0; }
.next svg { width: 8px; height: 10px; }
.filter { display: flex; align-items: center; height: 18px; margin: 0 3px 0 2px; padding-left: 2px; border: 1px solid #ccc; border-top: 0; }
.tree-wrap { flex: 1; min-height: 0; display: flex; }
.tree { flex: 1; display: grid; grid-auto-rows: 1fr; margin: 0; padding: 0 0 3px; list-style: none; font-size: 9px; line-height: 14px; color: #222; }
.tree li { display: flex; align-items: center; gap: 3px; padding-left: 6px; min-height: 0; position: relative; }
.tree li.sub { padding-left: 36px; }
.tree li.off { color: #999; }
.tree i { width: 10px; height: 6px; display: flex; align-items: center; }
.tree .open::before { content: ""; border: 3px solid transparent; border-top-color: #555; border-bottom: 0; }
.tree .shut::before { content: ""; margin-left: 1px; border: 3px solid transparent; border-left-color: #555; border-right: 0; }
.tree .rollback::after { content: ""; position: absolute; left: 0; right: 0; bottom: -1px; height: 2px; background: #b6b3d0; }
.scroll { width: 13px; background: #efefef; padding-left: 6px; display: flex; flex-direction: column; }
.thumb { width: 2px; margin-top: 163px; margin-bottom: 14px; flex: 1; background: #888; }
.splitter { position: absolute; left: 201px; top: 285px; width: 7px; height: 29px; justify-content: center; background: #f5f5f5; border: 1px solid #bbb; border-left: 0; }

.viewport { flex: 1; min-width: 0; position: relative; overflow: hidden; }
.model { width: 100%; height: 100%; }
.datum { font: bold 15px/16px "Noto Sans CJK SC", sans-serif; }
.bright { fill: #f49a4c; }
.brown { fill: #a0703f; }
.axis { font: 6px/8px "Liberation Sans", sans-serif; }
.green { fill: #2aa02a; }
.red { fill: #e03030; }
.view-name { font: bold 8px/10px "Noto Sans CJK SC", sans-serif; fill: #222; }
.taskpane { position: absolute; right: 0; top: 19px; width: 18px; border: 1px solid #999; border-right: 0; background: #d2d2d2; }
.taskpane button { width: 17px; height: 17px; justify-content: center; border-bottom: 1px solid #aaa; }
.taskpane .on { background: #fff; }
```
